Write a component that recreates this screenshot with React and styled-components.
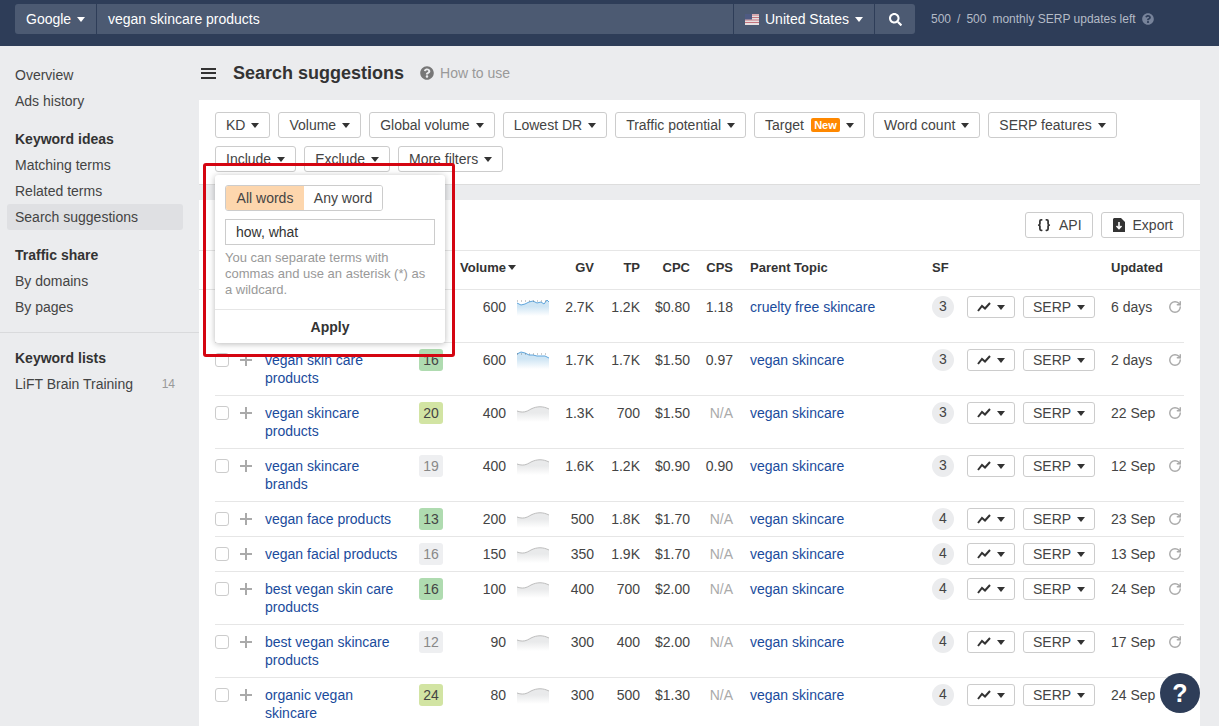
import React from 'react'
import styled, { createGlobalStyle } from 'styled-components'
import { FaSearch, FaQuestionCircle } from 'react-icons/fa'
import { RotateCw, Braces } from 'lucide-react'

const GlobalStyle = createGlobalStyle`
  html, body {
    margin: 0;
    height: 726px;
    overflow: hidden;
    background: #ebecee;
    font-family: "Liberation Sans", Arial, sans-serif;
    font-size: 14px;
    color: #333;
  }
  * { box-sizing: border-box; }
`

const Header = styled.header`
  height: 46px;
  background: #2e3d58;
  padding: 4px 15px 0;
  display: flex;
  align-items: flex-start;
`

const SearchBar = styled.div`
  width: 900px;
  height: 30px;
  display: flex;
  background: #4c5a72;
  border-radius: 3px;
  color: #fff;
`

const SearchPart = styled.div`
  height: 30px;
  display: flex;
  align-items: center;
  white-space: nowrap;
  flex: ${props => props.$grow ? 1 : 'none'};
  width: ${props => props.$width ? props.$width + 'px' : 'auto'};
  padding: 0 ${props => props.$pad || 0}px;
  justify-content: ${props => props.$center ? 'center' : 'flex-start'};
  border-right: ${props => props.$last ? 'none' : '1px solid #2e3d58'};
`

const FlagIcon = styled.svg`
  flex: none;
  margin-right: 6px;
`

const Quota = styled.div`
  margin-left: 16px;
  height: 30px;
  display: flex;
  align-items: center;
  gap: 6px;
  font-size: 12px;
  color: #b4bbc7;
  svg { color: #77839a; }
`

const Caret = styled.span`
  display: inline-block;
  flex: none;
  width: 0;
  height: 0;
  margin-left: ${props => props.$gap ?? 6}px;
  border-left: 4px solid transparent;
  border-right: 4px solid transparent;
  border-top: 5px solid ${props => props.$light ? '#fff' : '#333'};
`

const Layout = styled.div`
  display: flex;
  height: 680px;
  overflow: hidden;
`

const Sidebar = styled.nav`
  width: 199px;
  flex: none;
  padding-top: 16px;
`

const NavGroup = styled.div`
  margin-bottom: 12px;
  padding-bottom: ${props => props.$divided ? '12px' : 0};
  border-bottom: ${props => props.$divided ? '1px solid #d9dadc' : 'none'};
`

const NavTitle = styled.div`
  height: 26px;
  line-height: 26px;
  padding-left: 15px;
  font-weight: bold;
`

const NavItem = styled.a`
  height: 26px;
  margin: 0 16px 0 7px;
  padding: 0 8px;
  display: flex;
  align-items: center;
  justify-content: space-between;
  border-radius: 3px;
  color: #444;
  background: ${props => props.$active ? '#dfe0e3' : 'transparent'};
`

const NavCount = styled.span`
  font-size: 12px;
  color: #999;
`

const Main = styled.main`
  width: 1001px;
  flex: none;
  position: relative;
`

const TitleRow = styled.div`
  height: 54px;
  display: flex;
  align-items: center;
  padding: 0 0 0 2px;
`

const Burger = styled.span`
  width: 15px;
  height: 11px;
  margin-right: 17px;
  border-top: 2px solid #333;
  border-bottom: 2px solid #333;
  position: relative;
  &::after {
    content: "";
    position: absolute;
    left: 0;
    right: 0;
    top: 2.5px;
    height: 2px;
    background: #333;
  }
`

const Title = styled.h1`
  margin: 0 16px 0 0;
  font-size: 18px;
  font-weight: bold;
  color: #333;
`

const HowTo = styled.a`
  display: flex;
  align-items: center;
  gap: 6px;
  color: #999;
  svg { color: #777; }
`

const FilterPanel = styled.section`
  height: 85px;
  background: #fff;
  border-bottom: 1px solid #ddd;
  padding: 12px 16px;
  display: flex;
  flex-wrap: wrap;
  align-content: flex-start;
  gap: 8px;
`

const Button = styled.button`
  height: ${props => props.$small ? 22 : 26}px;
  padding: 0 ${props => props.$small ? 9 : 10}px;
  display: inline-flex;
  align-items: center;
  background: #fff;
  border: 1px solid #ccc;
  border-radius: 3px;
  font: inherit;
  color: #444;
  white-space: nowrap;
`

const NewBadge = styled.span`
  margin-left: 7px;
  width: 29px;
  height: 14px;
  line-height: 14px;
  text-align: center;
  background: #ff8800;
  border-radius: 2px;
  color: #fff;
  font-size: 11px;
  font-weight: bold;
`

const TablePanel = styled.section`
  margin-top: 15px;
  background: #fff;
`

const Toolbar = styled.div`
  height: 50px;
  padding: 12px 16px;
  display: flex;
  justify-content: flex-end;
  gap: 8px;
`

const ToolButton = styled(Button)`
  padding: 0 10px 0 11px;
  svg { margin-right: 8px; }
`

const gridColumns = '25px 25px 154px 24px 63px 43px 45px 46px 50px 43px 199px 35px 56px 88px 1fr'

const HeadRow = styled.div`
  height: 40px;
  padding: 0 16px 6px;
  border-top: 1px solid #e6e6e6;
  border-bottom: 1px solid #e6e6e6;
  display: grid;
  grid-template-columns: ${gridColumns};
  align-items: center;
  font-size: 13px;
  font-weight: bold;
  color: #333;
`

const HeadCell = styled.div`
  grid-column: ${props => props.$col};
  text-align: ${props => props.$right ? 'right' : 'left'};
  padding-left: ${props => props.$pad || 0}px;
  display: ${props => props.$flex ? 'flex' : 'block'};
  align-items: center;
`

const Row = styled.div`
  margin: 0 16px;
  padding: 8px 0;
  min-height: ${props => props.$tall ? '53px' : 'auto'};
  border-bottom: 1px solid #e6e6e6;
  display: grid;
  grid-template-columns: ${gridColumns};
  align-items: start;
  line-height: 18px;
`

const Check = styled.span`
  display: block;
  width: 14px;
  height: 14px;
  margin-top: 2px;
  border: 1px solid #ccc;
  border-radius: 3px;
`

const Plus = styled.span`
  display: block;
  width: 12px;
  height: 12px;
  margin-top: 3px;
  background:
    linear-gradient(#aaa, #aaa) center / 12px 2px no-repeat,
    linear-gradient(#aaa, #aaa) center / 2px 12px no-repeat;
`

const Link = styled.a`
  color: #1a4b9c;
`

const KeywordCell = styled.div`
  padding-right: 18px;
`

const Kd = styled.span`
  display: block;
  width: 24px;
  height: 22px;
  margin: -2px 0;
  line-height: 22px;
  text-align: center;
  border-radius: 3px;
  background: ${props => props.$bg};
  color: ${props => props.$bg === '#eeeff1' ? '#888' : '#444'};
`

const Num = styled.div`
  text-align: right;
  color: ${props => props.$muted ? '#aaa' : '#444'};
`

const Spark = styled.div`
  padding-left: 11px;
  height: 18px;
  svg { display: block; }
`

const Parent = styled.div`
  padding-left: 17px;
`

const SfBadge = styled.span`
  display: block;
  width: 22px;
  height: 22px;
  margin: -2px 0;
  line-height: 21px;
  text-align: center;
  border-radius: 50%;
  background: #ebecee;
  color: #444;
`

const RowButtons = styled.div`
  display: flex;
  margin: -2px 0;
`

const Updated = styled.div`
  display: flex;
  justify-content: space-between;
  align-items: center;
  padding-right: 2px;
  color: #444;
  svg { color: #aaa; }
`

const Popup = styled.div`
  position: absolute;
  left: 16px;
  top: 129px;
  width: 230px;
  height: 168px;
  background: #fff;
  border-radius: 3px;
  box-shadow: 0 1px 6px rgba(0, 0, 0, 0.28);
  padding: 10px 10px 0;
  display: flex;
  flex-direction: column;
`

const Segments = styled.div`
  display: flex;
  width: 158px;
  height: 26px;
  border: 1px solid #ccc;
  border-radius: 3px;
  overflow: hidden;
`

const Segment = styled.div`
  flex: ${props => props.$active ? '0 0 78px' : 1};
  text-align: center;
  line-height: 24px;
  color: #444;
  background: ${props => props.$active ? '#fdd6ad' : '#fff'};
`

const TermInput = styled.div`
  margin-top: 8px;
  height: 26px;
  padding-left: 10px;
  line-height: 24px;
  border: 1px solid #ccc;
  color: #333;
`

const Hint = styled.p`
  margin: 5px 0 0;
  font-size: 13px;
  line-height: 16px;
  color: #999;
`

const Apply = styled.div`
  margin: auto -10px 0;
  height: 34px;
  line-height: 35px;
  text-align: center;
  border-top: 1px solid #e6e6e6;
  font-weight: bold;
`

const Highlight = styled.div`
  position: absolute;
  left: 4px;
  top: 117px;
  width: 252px;
  height: 194px;
  border: 3px solid #d40511;
  border-radius: 3px;
  pointer-events: none;
`

const HelpButton = styled.div`
  position: fixed;
  left: 1160px;
  top: 673px;
  width: 40px;
  height: 40px;
  border-radius: 50%;
  background: #2e3d58;
  color: #fff;
  font-size: 25px;
  font-weight: bold;
  line-height: 40px;
  text-align: center;
`

const GREEN = '#afdbb0'
const LIME = '#d2e4a3'
const GRAY = '#eeeff1'

// first row's keyword and KD sit behind the popup in the screenshot
const rows = [
  { id: 1, vol: '600', gv: '2.7K', tp: '1.2K', cpc: '$0.80', cps: '1.18', parent: 'cruelty free skincare', sf: 3, date: '6 days', spark: 'a' },
  { id: 2, kw: 'vegan skin care products', kd: 16, bg: GREEN, vol: '600', gv: '1.7K', tp: '1.7K', cpc: '$1.50', cps: '0.97', parent: 'vegan skincare', sf: 3, date: '2 days', spark: 'b' },
  { id: 3, kw: 'vegan skincare products', kd: 20, bg: LIME, vol: '400', gv: '1.3K', tp: '700', cpc: '$1.50', cps: 'N/A', parent: 'vegan skincare', sf: 3, date: '22 Sep' },
  { id: 4, kw: 'vegan skincare brands', kd: 19, bg: GRAY, vol: '400', gv: '1.6K', tp: '1.2K', cpc: '$0.90', cps: '0.90', parent: 'vegan skincare', sf: 3, date: '12 Sep' },
  { id: 5, kw: 'vegan face products', kd: 13, bg: GREEN, vol: '200', gv: '500', tp: '1.8K', cpc: '$1.70', cps: 'N/A', parent: 'vegan skincare', sf: 4, date: '23 Sep' },
  { id: 6, kw: 'vegan facial products', kd: 16, bg: GRAY, vol: '150', gv: '350', tp: '1.9K', cpc: '$1.70', cps: 'N/A', parent: 'vegan skincare', sf: 4, date: '13 Sep' },
  { id: 7, kw: 'best vegan skin care products', kd: 16, bg: GREEN, vol: '100', gv: '400', tp: '700', cpc: '$2.00', cps: 'N/A', parent: 'vegan skincare', sf: 4, date: '24 Sep' },
  { id: 8, kw: 'best vegan skincare products', kd: 12, bg: GRAY, vol: '90', gv: '300', tp: '400', cpc: '$2.00', cps: 'N/A', parent: 'vegan skincare', sf: 4, date: '17 Sep' },
  { id: 9, kw: 'organic vegan skincare', kd: 24, bg: LIME, vol: '80', gv: '300', tp: '500', cpc: '$1.30', cps: 'N/A', parent: 'vegan skincare', sf: 4, date: '24 Sep' }
]

const filters = ['KD', 'Volume', 'Global volume', 'Lowest DR', 'Traffic potential', 'Target', 'Word count', 'SERP features', 'Include', 'Exclude', 'More filters']

const sparkLines = {
  a: 'M0 5 L4 7 L8 6 L12 4 L16 3 L20 5 L24 4 L27 6 L30 2 L32 4',
  b: 'M0 3 L4 1 L8 2 L12 4 L16 4 L20 5 L24 5 L28 5 L32 7',
  gray: 'M0 7 C6 9 9 8 14 5 C20 2 26 2 32 5'
}

function Sparkline ({ kind, index }) {
  const line = sparkLines[kind || 'gray']
  const color = kind ? '#5ea5dc' : '#bdbdbd'
  const fill = kind ? '#cfe5f4' : '#e9eaeb'
  const id = 'spark' + index
  return (
    <svg width="32" height="18" viewBox="0 0 32 18">
      <defs>
        <linearGradient id={id} x1="0" y1="0" x2="0" y2="1">
          <stop offset="0.4" stopColor={fill} />
          <stop offset="1" stopColor="#fff" />
        </linearGradient>
      </defs>
      <path d={line + ' L32 18 L0 18 Z'} fill={`url(#${id})`} />
      <path d={line} fill="none" stroke={color} strokeWidth="1" />
      {kind && <path d="M0 3 H32" stroke="#555" strokeWidth="0.6" strokeDasharray="1 3" />}
    </svg>
  )
}

function TrendIcon () {
  return (
    <svg width="14" height="10" viewBox="0 0 14 10">
      <path d="M1 9 L5 4 L8 6.5 L13 1" fill="none" stroke="#333" strokeWidth="2" />
    </svg>
  )
}

function ExportIcon () {
  return (
    <svg width="12" height="14" viewBox="0 0 12 14">
      <path d="M1 0 H8 L12 4 V14 H0 V1 Z" fill="#333" />
      <path d="M6 4 V10 M3.5 8 L6 10.5 L8.5 8" fill="none" stroke="#fff" strokeWidth="1.6" />
    </svg>
  )
}

function Flag () {
  return (
    <FlagIcon width="14" height="11" viewBox="0 0 14 11">
      <rect width="14" height="11" fill="#e6dfe0" />
      <path d="M0 1 H14 M0 3.5 H14 M0 6 H14 M0 8.5 H14" stroke="#c4737d" strokeWidth="1.2" />
      <rect width="7" height="5.5" fill="#4e5a82" />
    </FlagIcon>
  )
}

function KeywordRow ({ row, index }) {
  return (
    <Row $tall={!row.kw}>
      <Check />
      <Plus />
      <KeywordCell><Link>{row.kw}</Link></KeywordCell>
      {row.kd ? <Kd $bg={row.bg}>{row.kd}</Kd> : <span />}
      <Num>{row.vol}</Num>
      <Spark><Sparkline kind={row.spark} index={index} /></Spark>
      <Num>{row.gv}</Num>
      <Num>{row.tp}</Num>
      <Num>{row.cpc}</Num>
      <Num $muted={row.cps === 'N/A'}>{row.cps}</Num>
      <Parent><Link>{row.parent}</Link></Parent>
      <SfBadge>{row.sf}</SfBadge>
      <RowButtons>
        <Button $small><TrendIcon /><Caret /></Button>
      </RowButtons>
      <RowButtons>
        <Button $small>SERP<Caret /></Button>
      </RowButtons>
      <Updated>{row.date}<RotateCw size={14} strokeWidth={2.5} /></Updated>
    </Row>
  )
}

export default function App () {
  return (
    <>
      <GlobalStyle />
      <Header>
        <SearchBar>
          <SearchPart $width={82} $pad={11}>Google<Caret $light /></SearchPart>
          <SearchPart $grow $pad={11}>vegan skincare products</SearchPart>
          <SearchPart $width={141} $pad={11}><Flag />United States<Caret $light /></SearchPart>
          <SearchPart $width={40} $center $last><FaSearch size={13} /></SearchPart>
        </SearchBar>
        <Quota>
          <span>500</span><span>/</span><span>500</span>
          <span>monthly SERP updates left</span>
          <FaQuestionCircle size={12} />
        </Quota>
      </Header>
      <Layout>
        <Sidebar>
          <NavGroup>
            <NavItem>Overview</NavItem>
            <NavItem>Ads history</NavItem>
          </NavGroup>
          <NavGroup>
            <NavTitle>Keyword ideas</NavTitle>
            <NavItem>Matching terms</NavItem>
            <NavItem>Related terms</NavItem>
            <NavItem $active>Search suggestions</NavItem>
          </NavGroup>
          <NavGroup $divided>
            <NavTitle>Traffic share</NavTitle>
            <NavItem>By domains</NavItem>
            <NavItem>By pages</NavItem>
          </NavGroup>
          <NavGroup>
            <NavTitle>Keyword lists</NavTitle>
            <NavItem>LiFT Brain Training<NavCount>14</NavCount></NavItem>
          </NavGroup>
        </Sidebar>
        <Main>
          <TitleRow>
            <Burger />
            <Title>Search suggestions</Title>
            <HowTo><FaQuestionCircle size={14} />How to use</HowTo>
          </TitleRow>
          <FilterPanel>
            {filters.map(name => (
              <Button key={name}>
                {name}
                {name === 'Target' && <NewBadge>New</NewBadge>}
                <Caret />
              </Button>
            ))}
          </FilterPanel>
          <TablePanel>
            <Toolbar>
              <ToolButton><Braces size={14} strokeWidth={3} color="#333" />API</ToolButton>
              <ToolButton><ExportIcon />Export</ToolButton>
            </Toolbar>
            <HeadRow>
              <HeadCell $col="5 / span 2" $pad={17} $flex>Volume<Caret $gap={2} /></HeadCell>
              <HeadCell $col="7" $right>GV</HeadCell>
              <HeadCell $col="8" $right>TP</HeadCell>
              <HeadCell $col="9" $right>CPC</HeadCell>
              <HeadCell $col="10" $right>CPS</HeadCell>
              <HeadCell $col="11" $pad={17}>Parent Topic</HeadCell>
              <HeadCell $col="12">SF</HeadCell>
              <HeadCell $col="15">Updated</HeadCell>
            </HeadRow>
            {rows.map((row, i) => <KeywordRow key={row.id} row={row} index={i} />)}
          </TablePanel>
          <Popup>
            <Segments>
              <Segment $active>All words</Segment>
              <Segment>Any word</Segment>
            </Segments>
            <TermInput>how, what</TermInput>
            <Hint>You can separate terms with commas and use an asterisk (*) as a wildcard.</Hint>
            <Apply>Apply</Apply>
          </Popup>
          <Highlight />
        </Main>
      </Layout>
      <HelpButton>?</HelpButton>
    </>
  )
}
